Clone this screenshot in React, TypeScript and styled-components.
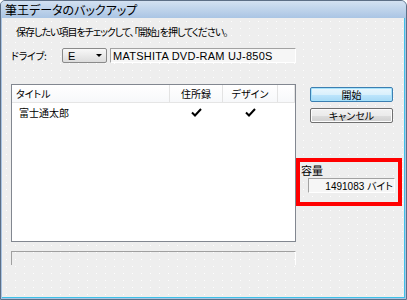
import styled, { createGlobalStyle } from 'styled-components'

const GlobalStyle = createGlobalStyle`
  html, body {
    margin: 0;
    padding: 0;
    background: #ffffff;
  }
  body {
    font-family: "Noto Sans CJK JP", "Liberation Sans", sans-serif;
    font-feature-settings: "palt";
    color: #000;
  }
`

const Window = styled.div`
  width: 407px;
  height: 300px;
  box-sizing: border-box;
  display: flex;
  flex-direction: column;
  border: 1px solid #5d6f86;
  border-radius: 5px 6px 0 0;
  overflow: hidden;
  background: #a9c4e3;
`

const TitleBar = styled.div`
  height: 17px;
  flex-shrink: 0;
  display: flex;
  align-items: center;
  padding-left: 4px;
  background: linear-gradient(#d3e1f1, #aac5e4);
  font-size: 12px;
  line-height: 1;
`

const Body = styled.div`
  flex: 1;
  margin: 0 1px 1px 1px;
  border-right: 1px solid #3cc0e8;
  border-bottom: 1px solid #3cc0e8;
  display: flex;
  flex-direction: column;
  padding: 0 0 0 9px;
  background-color: #eeeeee;
  background-image: radial-gradient(circle, rgba(255, 255, 255, 0.95) 0.7px, transparent 0.9px);
  background-size: 9px 7px;
  font-size: 10px;
  position: relative;
`

const Instruction = styled.div`
  margin: 7px 0 0 5px;
  height: 14px;
  line-height: 14px;
  letter-spacing: -1px;
`

const DriveRow = styled.div`
  display: flex;
  align-items: center;
  margin-top: 9px;
  height: 15px;
`

const DriveLabel = styled.span`
  width: 51px;
  letter-spacing: -0.3px;
`

const Combo = styled.div`
  display: flex;
  align-items: center;
  justify-content: space-between;
  padding: 0 4px 0 5px;
  box-sizing: border-box;
  width: 45px;
  height: 15px;
  border: 1px solid #8a8a8a;
  border-radius: 2px;
  background: linear-gradient(#f8f8f8, #dcdcdc);
  font-family: "Liberation Sans", sans-serif;
  font-size: 11px;
`

const Arrow = styled.span`
  width: 0;
  height: 0;
  border-left: 3px solid transparent;
  border-right: 3px solid transparent;
  border-top: 3px solid #000;
`

const ReadField = styled.div<{ $align?: string }>`
  height: 15px;
  box-sizing: border-box;
  display: flex;
  align-items: center;
  justify-content: ${(p) => p.$align ?? 'flex-start'};
  padding: 0 2px;
  border-top: 1px solid #a2a2a2;
  border-left: 1px solid #a2a2a2;
  border-right: 1px solid #ffffff;
  border-bottom: 1px solid #ffffff;
  background: #f6f6f6;
  font-family: "Liberation Sans", "Noto Sans CJK JP", sans-serif;
  font-size: 11px;
  white-space: nowrap;
  overflow: hidden;
`

const DriveName = styled(ReadField)`
  margin-left: 3px;
  width: 186px;
  letter-spacing: 0.25px;
`

const Main = styled.div`
  display: flex;
  margin-top: 21px;
`

const LeftColumn = styled.div`
  width: 285px;
  flex-shrink: 0;
  display: flex;
  flex-direction: column;
`

const List = styled.div`
  height: 158px;
  box-sizing: border-box;
  border: 1px solid #828790;
  background: #ffffff;
`

const HeaderRow = styled.div`
  display: grid;
  grid-template-columns: 158px 53px 55px 1fr;
  height: 17px;
  border-bottom: 1px solid #e5e5e5;
`

const HeaderCell = styled.div<{ $center?: boolean }>`
  display: flex;
  align-items: center;
  justify-content: ${(p) => (p.$center ? 'center' : 'flex-start')};
  padding-left: ${(p) => (p.$center ? '0' : '4px')};
  border-right: 1px solid #e3e3e3;
  background: linear-gradient(#ffffff, #f7f8fa);
`

const Row = styled.div`
  display: grid;
  grid-template-columns: 158px 53px 55px 1fr;
  height: 17px;
  margin-top: 1px;
`

const Cell = styled.div<{ $center?: boolean }>`
  display: flex;
  align-items: center;
  justify-content: ${(p) => (p.$center ? 'center' : 'flex-start')};
  padding-left: ${(p) => (p.$center ? '0' : '7px')};
  font-size: 10px;
`

const Status = styled.div`
  margin-top: 9px;
  height: 14px;
  box-sizing: border-box;
  border-top: 1px solid #a0a0a0;
  border-left: 1px solid #a0a0a0;
  border-right: 1px solid #ffffff;
`

const RightColumn = styled.div`
  flex: 1;
  display: flex;
  flex-direction: column;
  align-items: flex-start;
  padding-top: 3px;
`

const Button = styled.button<{ $default?: boolean }>`
  width: 83px;
  height: 15px;
  padding: 0;
  margin: 0 0 6px 14px;
  border: 1px solid ${(p) => (p.$default ? '#3c7fb1' : '#707070')};
  border-radius: 2px;
  background: ${(p) =>
    p.$default
      ? 'linear-gradient(#eaf6fd 0%, #d9f0fc 50%, #bee6fd 51%, #a7d9f5 100%)'
      : 'linear-gradient(#f2f2f2 0%, #ebebeb 50%, #dddddd 51%, #cfcfcf 100%)'};
  box-shadow: ${(p) => (p.$default ? 'inset 0 0 0 1px #a6e2fb' : 'inset 0 0 0 1px #fcfcfc')};
  font-family: "Noto Sans CJK JP", sans-serif;
  font-feature-settings: "palt";
  font-size: 10px;
  line-height: 1;
  color: #000;
`

const Capacity = styled.div`
  margin: 34px 0 0 5px;
  display: flex;
  flex-direction: column;
`

const CapacityLabel = styled.div`
  font-size: 11px;
  height: 14px;
  line-height: 14px;
`

const CapacityField = styled(ReadField)`
  margin: 1px 0 0 7px;
  width: 87px;
  padding-right: 1px;
  font-size: 10px;
`

const Highlight = styled.div`
  position: absolute;
  left: 294px;
  top: 140px;
  width: 106px;
  height: 48px;
  box-sizing: border-box;
  border: 4px solid #ff0000;
  pointer-events: none;
`

function Check() {
  return (
    <svg width="11" height="9" viewBox="0 0 11 9">
      <path d="M1 4.5 L4 7.5 L10 1" fill="none" stroke="#000" strokeWidth="2" />
    </svg>
  )
}

export default function App() {
  return (
    <>
      <GlobalStyle />
      <Window>
        <TitleBar>筆王データのバックアップ</TitleBar>
        <Body>
          <Instruction>保存したい項目をチェックして、「開始」を押してください。</Instruction>
          <DriveRow>
            <DriveLabel>ドライブ:</DriveLabel>
            <Combo>
              E
              <Arrow />
            </Combo>
            <DriveName>MATSHITA DVD-RAM UJ-850S</DriveName>
          </DriveRow>
          <Main>
            <LeftColumn>
              <List>
                <HeaderRow>
                  <HeaderCell>タイトル</HeaderCell>
                  <HeaderCell $center>住所録</HeaderCell>
                  <HeaderCell $center>デザイン</HeaderCell>
                  <HeaderCell />
                </HeaderRow>
                <Row>
                  <Cell>富士通太郎</Cell>
                  <Cell $center>
                    <Check />
                  </Cell>
                  <Cell $center>
                    <Check />
                  </Cell>
                  <Cell />
                </Row>
              </List>
              <Status />
            </LeftColumn>
            <RightColumn>
              <Button $default>開始</Button>
              <Button>キャンセル</Button>
              <Capacity>
                <CapacityLabel>容量</CapacityLabel>
                <CapacityField $align="flex-end">1491083 バイト</CapacityField>
              </Capacity>
            </RightColumn>
          </Main>
          <Highlight />
        </Body>
      </Window>
    </>
  )
}
